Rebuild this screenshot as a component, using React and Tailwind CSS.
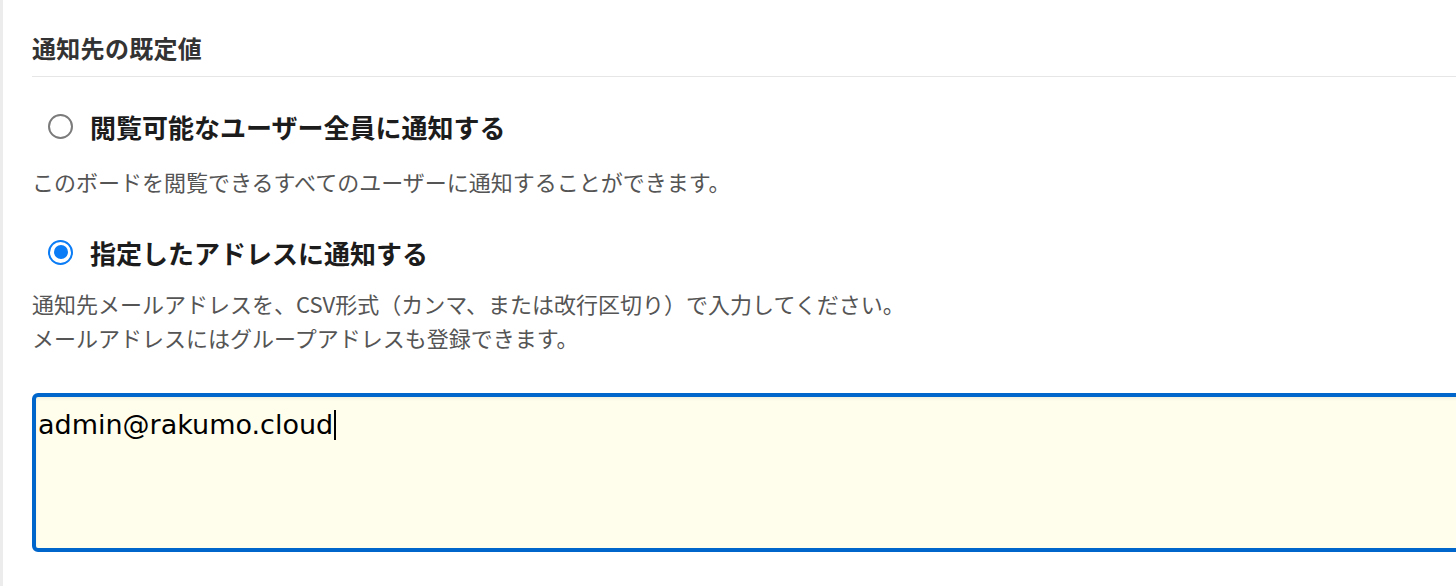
import React from "react";

const font = { fontFamily: '"Noto Sans CJK JP", "Noto Sans", sans-serif' };

const Radio = ({ checked }) =>
  checked ? (
    <span className="flex h-[25px] w-[25px] shrink-0 items-center justify-center rounded-full border-[2.5px] border-[#0a7cf5] bg-white">
      <span className="h-[14px] w-[14px] rounded-full bg-[#0a7cf5]" />
    </span>
  ) : (
    <span className="h-[25px] w-[25px] shrink-0 rounded-full border-2 border-[#7b7b7b] bg-white" />
  );

const App = () => {
  return (
    <div
      className="h-[586px] w-full overflow-hidden border-l-[3px] border-[#ececec] bg-white pl-[29px]"
      style={font}
    >
      <div className="border-b border-[#e6e6e6] pb-3 pt-8">
        <h2 className="text-[24px] font-bold leading-8 tracking-[0.3px] text-[#333]">
          通知先の既定値
        </h2>
      </div>

      <label className="mt-[31px] flex h-9 items-center gap-[17px] pl-4">
        <Radio />
        <span className="text-[26px] font-bold text-[#1c1c1c]">
          閲覧可能なユーザー全員に通知する
        </span>
      </label>
      <p className="mt-5 text-[22px] leading-[34px] text-[#555]">
        このボードを閲覧できるすべてのユーザーに通知することができます。
      </p>

      <label className="mt-9 flex h-9 items-center gap-[17px] pl-4">
        <Radio checked />
        <span className="text-[26px] font-bold text-[#1c1c1c]">
          指定したアドレスに通知する
        </span>
      </label>
      <div className="mt-4 text-[22px] leading-[34px] text-[#555]">
        <p>通知先メールアドレスを、CSV形式（カンマ、または改行区切り）で入力してください。</p>
        <p>メールアドレスにはグループアドレスも登録できます。</p>
      </div>

      <div className="mt-[39px] h-[159px] w-[1440px] rounded-[6px] border-4 border-[#0066cc] bg-[#fffdeb] pl-[2px] pt-[12px] shadow-[inset_0_2px_3px_rgba(0,0,0,0.06)]">
        <div
          className="flex items-center text-[27px] leading-[32px] text-black"
          style={{ fontFamily: '"DejaVu Sans", "Noto Sans CJK JP", sans-serif' }}
        >
          <span>admin@rakumo.cloud</span>
          <span className="ml-[1px] h-[30px] w-[1.5px] bg-black" />
        </div>
      </div>
    </div>
  );
};

export default App;
